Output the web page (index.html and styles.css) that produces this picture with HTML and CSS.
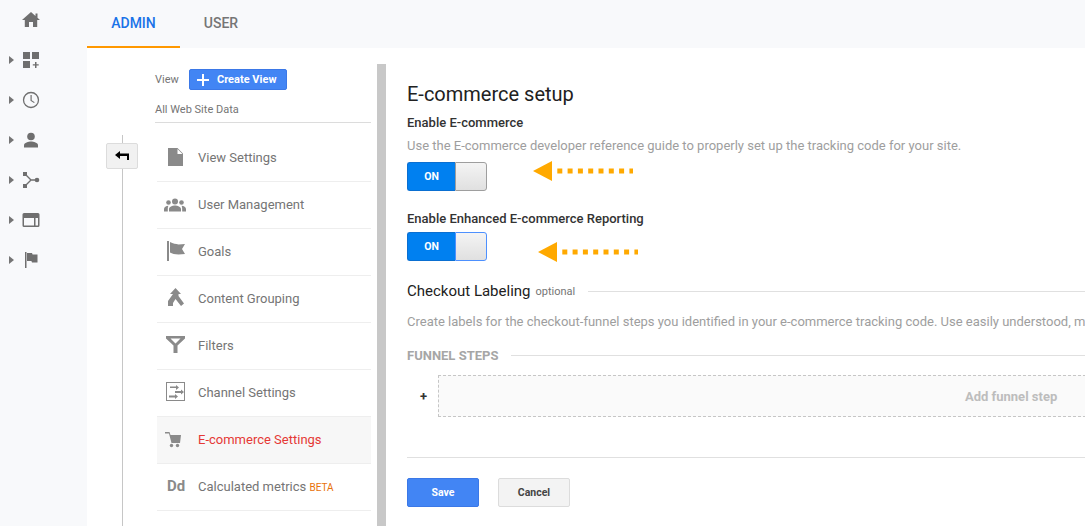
FILE: index.html
```html
<!DOCTYPE html>
<html lang="en">
<head>
    <meta charset="UTF-8">
    <title>E-commerce setup</title>
    <link rel="stylesheet" href="styles.css">
</head>
<body>
<div class="app">
    <nav class="rail">
        <div class="rail-item"><svg class="rail-icon" viewBox="0 0 18 18"><path d="M7 16v-5h4v5h4.200V9H18l-2.500-2.200V2.500h-2v2.500L9 1 0 9h2.800v7z"/></svg></div>
        <div class="rail-item"><span class="caret"></span><svg class="rail-icon" viewBox="0 0 18 18"><path d="M1 1h7v7H1zM10 1h7v7h-7zM1 10h7v7H1zM13 11h1.500v2.200h2.200v1.400h-2.200V17H13v-2.400h-2.200v-1.400H13z"/></svg></div>
        <div class="rail-item"><span class="caret"></span><svg class="rail-icon" viewBox="0 0 18 18"><circle cx="9" cy="9" r="7.500" fill="none" stroke="#6f6f6f" stroke-width="1.300"/><path d="M8.500 4h1.200v5.200l3 2-.7.900-3.500-2.400z"/></svg></div>
        <div class="rail-item"><span class="caret"></span><svg class="rail-icon" viewBox="0 0 18 18"><circle cx="9" cy="5.500" r="3.800"/><path d="M2 16.500v-2.300c0-2.500 4.500-3.700 7-3.700s7 1.200 7 3.700v2.300z"/></svg></div>
        <div class="rail-item"><span class="caret"></span><svg class="rail-icon" viewBox="0 0 18 18"><path d="M3 3l6 6-6 6M9 9h6" fill="none" stroke="#6f6f6f" stroke-width="1.400"/><path d="M1 1h4v4H1zM1 13h4v4H1z"/><circle cx="15" cy="9" r="2.300"/></svg></div>
        <div class="rail-item"><span class="caret"></span><svg class="rail-icon" viewBox="0 0 18 18"><path fill-rule="evenodd" d="M2 2h14a1.500 1.500 0 0 1 1.500 1.500v11A1.500 1.500 0 0 1 16 16H2a1.500 1.500 0 0 1-1.500-1.500v-11A1.500 1.500 0 0 1 2 2zm0 5v7.500h10V7zm11.500 0v7.500h2.500V7z"/></svg></div>
        <div class="rail-item"><span class="caret"></span><svg class="rail-icon" viewBox="0 0 18 18"><path d="M3 1h1.500v16H3zM5 2h5l.6 1.500H15.500v8H10l-.6-1.500H5z"/></svg></div>
    </nav>

    <div class="page">
        <div class="tabs">
            <div class="tab tab-active">ADMIN</div>
            <div class="tab">USER</div>
        </div>

        <div class="content">
            <div class="back-col">
                <button class="back-btn"><svg viewBox="0 0 14 10" width="14" height="10"><path d="M0 4l5-4v2.500h9V9h-2V5H5v3z"/></svg></button>
            </div>

            <aside class="sidebar">
                <div class="view-row">
                    <span class="view-label">View</span>
                    <button class="create-btn"><svg viewBox="0 0 12 12" width="12" height="12"><path d="M5 0h2v5h5v2H7v5H5V7H0V5h5z"/></svg>Create View</button>
                </div>
                <div class="view-name">All Web Site Data</div>

                <ul class="menu">
                    <li class="menu-item">
                        <svg class="menu-icon" viewBox="0 0 24 24"><path d="M5 3h9.500L20 8.500V21H5zM14.500 4v5H19.500z" fill-rule="evenodd"/></svg>
                        View Settings
                    </li>
                    <li class="menu-item">
                        <svg class="menu-icon" viewBox="0 0 24 24"><g transform="translate(0 1.500)"><circle cx="12" cy="8" r="3"/><circle cx="5.500" cy="9" r="2.300"/><circle cx="18.500" cy="9" r="2.300"/><path d="M6 18v-2.500C6 13.500 9.500 12 12 12s6 1.500 6 3.500V18zM1 18v-2.500C1 13.500 3 12.500 5.500 12.300 4.800 13.200 4.800 14.500 4.800 18zM23 18v-2.500c0-2-2-3-4.500-3.200.7.900.7 2.200.7 5.700z"/></g></svg>
                        User Management
                    </li>
                    <li class="menu-item">
                        <svg class="menu-icon" viewBox="0 0 24 24"><path d="M4 2h2v20H4zM7 3c3 1.500 6 2 8.500 2.500L22 5l-3 5 3 5-6.500.5C12 15.500 9 14.500 7 13.500z"/></svg>
                        Goals
                    </li>
                    <li class="menu-item">
                        <svg class="menu-icon" viewBox="0 0 24 24"><path d="M12.500 2L18 8h-2.500v2L21 17.500 18 20l-5.500-7L10 17v3H5v-5l5-7H7z"/></svg>
                        Content Grouping
                    </li>
                    <li class="menu-item">
                        <svg class="menu-icon" viewBox="0 0 24 24"><path d="M3 3h19v2.500l-7.500 7V20h-4v-7.500L3 5.500zM7.500 5.500l5 5 5-5z" fill-rule="evenodd"/></svg>
                        Filters
                    </li>
                    <li class="menu-item">
                        <svg class="menu-icon" viewBox="0 0 24 24"><path fill-rule="evenodd" d="M3 2h19v19H3zm1 1v17h17V3z"/><path d="M7 6.500h6V5l3 2.500-3 2.500V8H7zM12 11h6V9.500l3 2.500-3 2.500V13h-6zM6 15.500h6V14l3 2.500-3 2.500v-1.500H6z"/></svg>
                        Channel Settings
                    </li>
                    <li class="menu-item menu-item-active">
                        <svg class="menu-icon" viewBox="0 0 24 24"><path d="M2 5h4.500l1 3H18l-1 8H8.500L6 6.500H2z"/><circle cx="8.500" cy="18.500" r="1.700"/><circle cx="14.500" cy="18.500" r="1.700"/></svg>
                        E-commerce Settings
                    </li>
                    <li class="menu-item">
                        <span class="dd-icon">Dd</span>
                        <span>Calculated metrics <span class="beta">BETA</span></span>
                    </li>
                </ul>
            </aside>

            <div class="divider"></div>

            <main class="main">
                <h1 class="title">E-commerce setup</h1>
                <h2 class="field-label">Enable E-commerce</h2>
                <p class="hint">Use the E-commerce developer reference guide to properly set up the tracking code for your site.</p>
                <div class="toggle-row">
                    <div class="toggle"><span class="toggle-on">ON</span><span class="toggle-knob"></span></div>
                    <svg class="arrow" viewBox="0 0 100 20" width="100" height="20"><path d="M0 10L19 0v20z" fill="#ffa900"/><path d="M14 10h86" stroke="#ffa900" stroke-width="5" stroke-dasharray="5 5.300"/></svg>
                </div>

                <h2 class="field-label field-label-second">Enable Enhanced E-commerce Reporting</h2>
                <div class="toggle-row">
                    <div class="toggle toggle-focus"><span class="toggle-on">ON</span><span class="toggle-knob"></span></div>
                    <svg class="arrow arrow-second" viewBox="0 0 100 20" width="100" height="20"><path d="M0 10L19 0v20z" fill="#ffa900"/><path d="M14 10h86" stroke="#ffa900" stroke-width="5" stroke-dasharray="5 5.300"/></svg>
                </div>

                <div class="section-head">
                    <span class="section-title">Checkout Labeling</span>
                    <span class="optional">optional</span>
                    <span class="rule"></span>
                </div>
                <p class="hint hint-wide">Create labels for the checkout-funnel steps you identified in your e-commerce tracking code. Use easily understood, m</p>

                <div class="funnel-head">
                    <span class="funnel-title">FUNNEL STEPS</span>
                    <span class="rule"></span>
                </div>
                <div class="funnel-row">
                    <span class="plus">+</span>
                    <div class="dropzone"><span class="add-step">Add funnel step</span></div>
                </div>

                <div class="actions">
                    <button class="btn btn-save">Save</button>
                    <button class="btn btn-cancel">Cancel</button>
                </div>
            </main>
        </div>
    </div>
</div>
</body>
</html>
```

FILE: styles.css
```css
* {
    box-sizing: border-box;
}
html, body {
    margin: 0;
    height: 100%;
    overflow: hidden;
}
body {
    font-family: Roboto, Arial, sans-serif;
    background: #fff;
    color: #212121;
}
.app {
    display: flex;
    height: 526px;
    width: 1085px;
    overflow: hidden;
}

/* left rail */
.rail {
    width: 87px;
    flex: none;
    background: #f8f9fb;
}
.rail-item {
    height: 40px;
    position: relative;
    display: flex;
    align-items: center;
    padding-left: 22px;
}
.rail-icon {
    width: 18px;
    height: 18px;
    fill: #6f6f6f;
}
.caret {
    position: absolute;
    left: 9px;
    top: 16px;
    border-left: 5px solid #757575;
    border-top: 4px solid transparent;
    border-bottom: 4px solid transparent;
}

/* tabs */
.page {
    flex: 1;
    min-width: 0;
}
.tabs {
    height: 48px;
    display: flex;
    background: #f8f9fb;
}
.tab {
    width: 93px;
    padding-top: 15px;
    text-align: center;
    font-size: 14px;
    font-weight: 500;
    color: #757575;
}
.tab + .tab {
    width: 82px;
}
.tab-active {
    color: #1a73e8;
    border-bottom: 2px solid #ff9800;
}

.content {
    display: flex;
    height: 478px;
}

/* back column */
.back-col {
    width: 70px;
    flex: none;
    position: relative;
    padding: 95px 0 0 19px;
}
.back-col::before {
    content: "";
    position: absolute;
    left: 35px;
    top: 87px;
    bottom: 0;
    width: 1px;
    background: #c6c6c6;
}
.back-btn {
    position: relative;
    display: block;
    width: 32px;
    height: 26px;
    padding: 0;
    background: #f1f1f1;
    border: 1px solid #dcdcdc;
    border-radius: 2px;
}

/* sidebar */
.sidebar {
    width: 216px;
    flex: none;
    margin-left: -2px;
    margin-right: 6px;
}
.view-row {
    display: flex;
    align-items: center;
    height: 21px;
    margin-top: 21px;
}
.view-label {
    font-size: 11px;
    color: #757575;
    width: 34px;
}
.create-btn {
    display: flex;
    align-items: center;
    width: 98px;
    height: 21px;
    padding: 0 0 0 7px;
    background: #4285f4;
    border: 1px solid #3b78e7;
    border-radius: 2px;
    color: #fff;
    font: 700 11px Roboto, Arial, sans-serif;
}
.create-btn svg {
    fill: #fff;
    margin-right: 8px;
}
.view-name {
    font-size: 11px;
    color: #757575;
    height: 33px;
    padding-top: 13px;
    border-bottom: 1px solid #dcdcdc;
}
.menu {
    list-style: none;
    margin: 12px 0 0 2px;
    padding: 0;
}
.menu-item {
    display: flex;
    align-items: center;
    height: 47px;
    padding-bottom: 2px;
    border-bottom: 1px solid #eee;
    font-size: 13px;
    color: #757575;
}
.menu-item-active {
    background: #f7f7f7;
    color: #e53935;
}
.menu-icon {
    width: 24px;
    height: 24px;
    margin: 0 11px 0 6px;
    fill: #8a8a8a;
    flex: none;
}
.dd-icon {
    width: 41px;
    flex: none;
    padding-left: 10px;
    font-size: 15px;
    font-weight: 700;
    color: #8a8a8a;
}
.beta {
    font-size: 10px;
    color: #e8710a;
}

.divider {
    width: 9px;
    flex: none;
    margin-top: 16px;
    background: #c8c8c8;
}

/* main column */
.main {
    flex: 1;
    min-width: 0;
    padding: 34px 0 0 21px;
    overflow: hidden;
}
.title {
    margin: 0;
    font-size: 20px;
    font-weight: 400;
    line-height: 24px;
}
.field-label {
    margin: 9px 0 0;
    font-size: 13px;
    font-weight: 500;
    line-height: 16px;
    color: #333;
}
.field-label-second {
    margin-top: 20px;
}
.hint {
    margin: 7px 0 0;
    font-size: 13px;
    line-height: 16px;
    color: #9e9e9e;
    white-space: nowrap;
}
.toggle-row {
    display: flex;
    align-items: center;
    margin-top: 8px;
}
.field-label-second + .toggle-row {
    margin-top: 4px;
}
.toggle {
    display: flex;
    width: 80px;
    height: 29px;
}
.toggle-on {
    width: 48px;
    background: #0080f0;
    border: 1px solid #0a6fd1;
    border-right: 0;
    border-radius: 3px 0 0 3px;
    color: #fff;
    font-size: 10.500px;
    font-weight: 700;
    line-height: 27px;
    text-align: center;
}
.toggle-knob {
    flex: 1;
    background: linear-gradient(#f4f4f4, #e0e0e0);
    border: 1px solid #9e9e9e;
    border-radius: 0 3px 3px 0;
}
.toggle-focus .toggle-knob {
    border-color: #4d90fe;
}
.arrow {
    margin-left: 46px;
    margin-top: -1px;
    margin-bottom: 10px;
}
.arrow-second {
    margin-left: 51px;
    margin-bottom: 0;
    margin-top: 11px;
}
.section-head {
    display: flex;
    align-items: center;
    margin-top: 19px;
    height: 20px;
}
.section-title {
    font-size: 15px;
}
.optional {
    font-size: 11px;
    color: #757575;
    margin: 1px 13px 0 5px;
}
.rule {
    flex: 1;
    height: 1px;
    background: #e0e0e0;
}
.hint-wide {
    margin-top: 13px;
}
.funnel-head {
    display: flex;
    align-items: center;
    margin-top: 17px;
    height: 16px;
}
.funnel-title {
    font-size: 13px;
    font-weight: 700;
    color: #a6a6a6;
    margin-right: 13px;
}
.funnel-row {
    display: flex;
    align-items: center;
    margin-top: 12px;
}
.plus {
    width: 31px;
    padding-left: 13px;
    font-size: 13px;
    font-weight: 700;
    color: #333;
}
.dropzone {
    flex: 1;
    height: 42px;
    margin-right: -1px;
    padding-left: 526px;
    background: #fafafa;
    border: 1px dashed #c6c6c6;
    line-height: 40px;
}
.add-step {
    font-size: 13px;
    font-weight: 700;
    color: #bdbdbd;
}
.actions {
    margin-top: 40px;
    padding-top: 20px;
    border-top: 1px solid #e0e0e0;
    display: flex;
    gap: 19px;
}
.btn {
    width: 72px;
    height: 29px;
    padding: 0;
    font: 700 10.500px Roboto, Arial, sans-serif;
    border-radius: 2px;
}
.btn-save {
    background: #4285f4;
    border: 1px solid #3b78e7;
    color: #fff;
}
.btn-cancel {
    background: #f3f3f3;
    border: 1px solid #dcdcdc;
    color: #444;
}
```
